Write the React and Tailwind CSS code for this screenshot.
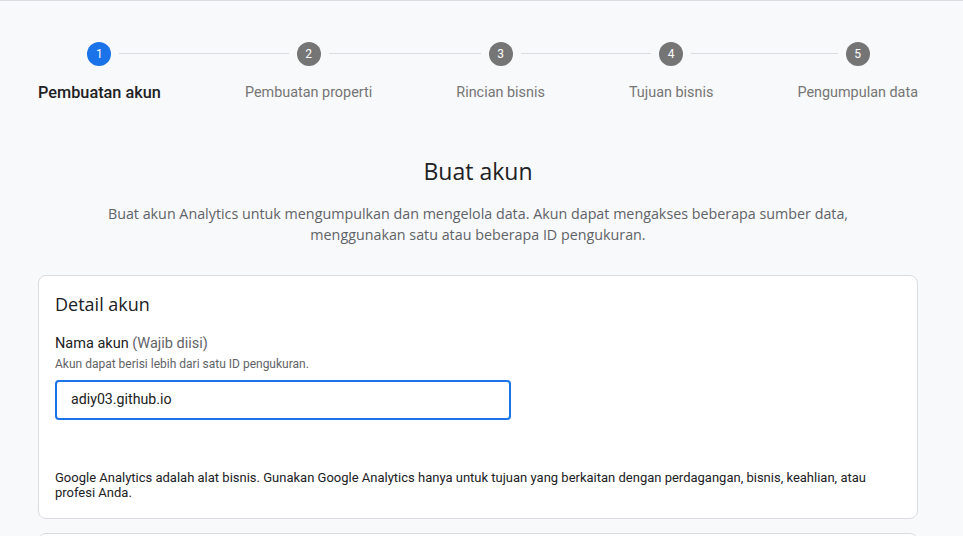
import React from 'react'

const steps = [
  { n: 1, label: 'Pembuatan akun', active: true },
  { n: 2, label: 'Pembuatan properti' },
  { n: 3, label: 'Rincian bisnis' },
  { n: 4, label: 'Tujuan bisnis' },
  { n: 5, label: 'Pengumpulan data' },
]

function Stepper() {
  return (
    <div className='relative flex justify-between'>
      {/* connector behind circles */}
      <div className='absolute left-[61px] right-[61px] top-[11px] h-px bg-[#dadce0]'></div>
      {steps.map((s) => (
        <div key={s.n} className='relative flex flex-col items-center'>
          <div
            className={`flex h-6 w-6 items-center justify-center rounded-full text-[12px] text-white ring-8 ring-[#f8f9fa] ${
              s.active ? 'bg-[#1a73e8]' : 'bg-[#757575]'
            }`}
          >
            {s.n}
          </div>
          <div
            className={`mt-[17px] leading-5 ${
              s.active ? 'text-[16.3px] font-medium text-[#202124]' : 'text-[14.4px] text-[#757575]'
            }`}
          >
            {s.label}
          </div>
        </div>
      ))}
    </div>
  )
}

export default function App() {
  return (
    <div className='h-[536px] overflow-hidden border-t border-[#dadce0] bg-[#f8f9fa] font-["Roboto",sans-serif]'>
      <div className='ml-[38px] w-[880px] pt-[41px]'>
        <Stepper />

        <h1 className='mt-[52px] text-center font-["Open_Sans",sans-serif] text-[23px] leading-8 text-[#202124]'>
          Buat akun
        </h1>
        <p className='mx-auto mt-[16px] max-w-[780px] text-center font-["Open_Sans",sans-serif] text-[14.3px] font-medium leading-[21px] text-[#5f6368]'>
          Buat akun Analytics untuk mengumpulkan dan mengelola data. Akun dapat mengakses beberapa sumber data,
          menggunakan satu atau beberapa ID pengukuran.
        </p>

        <div className='mt-[30px] rounded-lg border border-[#dadce0] bg-white px-4 pb-[18px] pt-[16px]'>
          <h2 className='font-["Open_Sans",sans-serif] text-[18px] leading-6 text-[#202124]'>Detail akun</h2>
          <div className='mt-[18px] text-[14.5px] leading-5 text-[#202124]'>
            Nama akun <span className='text-[#5f6368]'>(Wajib diisi)</span>
          </div>
          <div className='mt-[2px] text-[12px] leading-4 text-[#5f6368]'>
            Akun dapat berisi lebih dari satu ID pengukuran.
          </div>
          <div className='mt-[8px] flex h-10 w-[456px] items-center rounded border-2 border-[#1a73e8] px-[14px] text-[14.2px] text-[#202124]'>
            adiy03.github.io
          </div>
          <p className='mt-[50px] text-[13px] leading-[15px] text-[#202124]'>
            Google Analytics adalah alat bisnis. Gunakan Google Analytics hanya untuk tujuan yang berkaitan dengan
            perdagangan, bisnis, keahlian, atau profesi Anda.
          </p>
        </div>

        <div className='mt-[14px] h-[40px] rounded-lg border border-[#dadce0] bg-white'></div>
      </div>
    </div>
  )
}
